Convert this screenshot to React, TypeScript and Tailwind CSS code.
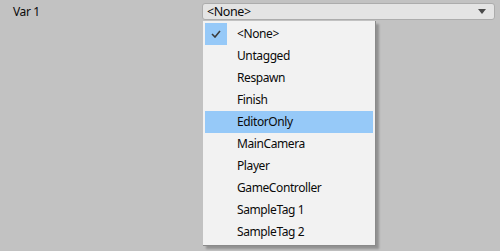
const tags = [
  "<None>",
  "Untagged",
  "Respawn",
  "Finish",
  "EditorOnly",
  "MainCamera",
  "Player",
  "GameController",
  "SampleTag 1",
  "SampleTag 2",
];

export default function App() {
  return (
    <div className="w-[500px] h-[251px] bg-[#c2c2c2] relative overflow-hidden font-['Noto_Sans',sans-serif] text-[12px] tracking-[-0.4px] text-[#0a0a0a]">
      {/* Property row */}
      <div className="flex items-center h-[17px] mt-[3px]">
        <div className="w-[202px] pl-[13px] leading-[17px]">Var 1</div>
        <div className="w-[293px] h-[17px] bg-[#e4e4e4] border border-[#acacac] rounded-[3px] flex items-center justify-between pl-[4px] pr-[8px]">
          <span className="leading-[15px] text-[12.5px]">&lt;None&gt;</span>
          <svg width="8" height="5" viewBox="0 0 8 5">
            <path d="M0 0h8L4 5z" fill="#4a4a4a" />
          </svg>
        </div>
      </div>

      {/* Dropdown menu */}
      <div className="absolute left-[203px] top-[21px] w-[173px] bg-[#f2f2f2] border-r border-b border-[#8a8a8a] shadow-[3px_3px_2px_rgba(0,0,0,0.25)] py-[2px] pl-[2px] pr-[2px]">
        {tags.map((tag, i) => (
          <div
            key={tag}
            className={
              "flex items-center h-[22px] " +
              (i === 4 ? "bg-[#96c9f8]" : "")
            }
          >
            <div
              className={
                "w-[22px] h-[22px] flex items-center justify-center " +
                (i === 0 ? "bg-[#96c9f8]" : "")
              }
            >
              {i === 0 && (
                <svg width="10" height="8" viewBox="0 0 10 8">
                  <path
                    d="M1 4l3 3 5-6"
                    fill="none"
                    stroke="#3c3c3c"
                    strokeWidth="1.6"
                  />
                </svg>
              )}
            </div>
            <span className="pl-[10px] leading-[22px]">{tag}</span>
          </div>
        ))}
      </div>
    </div>
  );
}
